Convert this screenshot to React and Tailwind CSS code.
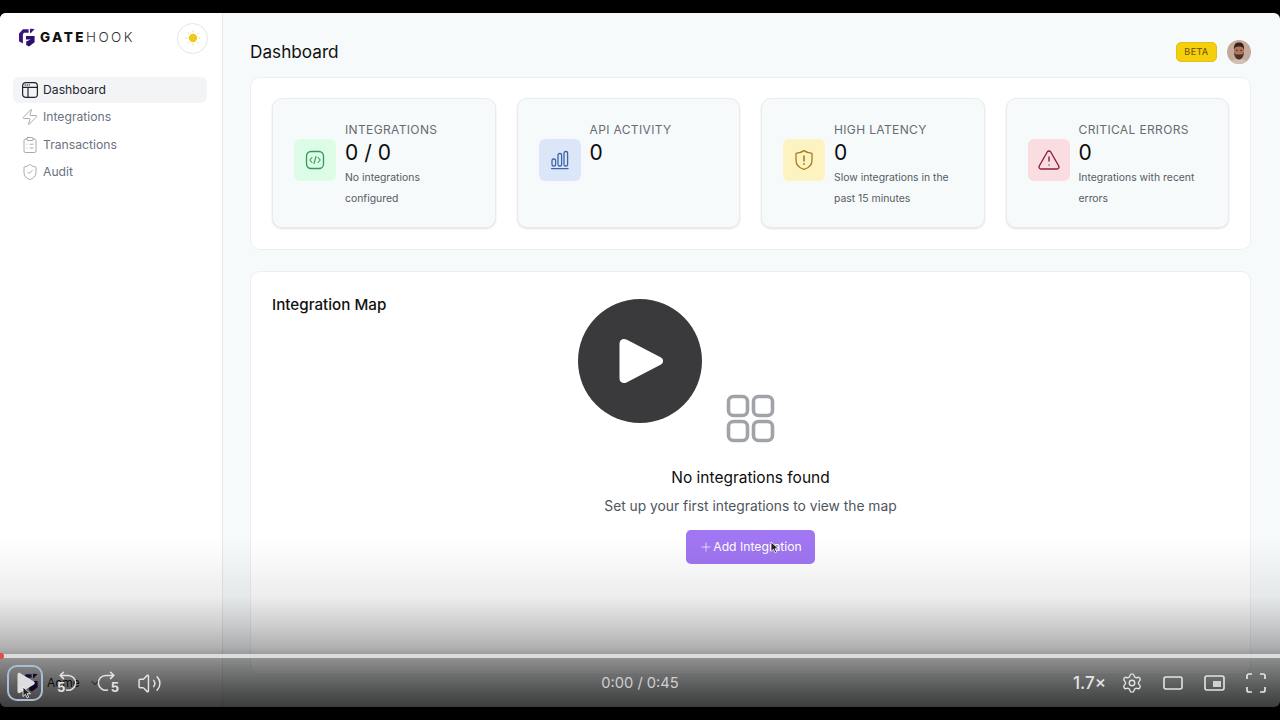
import React from "react";
import { Zap, ClipboardList, ShieldCheck, TriangleAlert, ChevronDown, Settings, Volume2, Plus } from "lucide-react";

const DashIcon = () => (
  <svg width="18" height="18" viewBox="0 0 18 18" fill="none" stroke="#1f2430" strokeWidth="1.2" className="shrink-0">
    <rect x="1.6" y="1.6" width="14.8" height="14.8" rx="3.2" />
    <path d="M1.6 6.4h14.8M7 6.4v10" />
    <path d="M4 4h.6M6 4h.6M8 4h.6" strokeWidth="1" strokeLinecap="round" />
  </svg>
);

const Logo = ({ className }) => (
  <svg width="16" height="19" viewBox="0 0 16 19" className={className}>
    <path d="M0 5.500 4 1.200h5.600v3.600H5.200L3.900 6.100V15.400L0 13.200Z" fill="#3a1480" />
    <path d="M11 .8 15.600 1 11.800 5.200 11 4.600Z" fill="#3a1480" />
    <path d="M7 8h8.600v6.200L10 18.600 7.200 17V13.600l4.600-2.200H7Z" fill="#2d0f70" />
  </svg>
);

const Sun = () => (
  <svg width="16" height="16" viewBox="0 0 16 16" fill="none">
    <circle cx="8" cy="8" r="4.200" fill="#edc91f" />
    <path d="M8 .8v1.200M8 14v1.200M.8 8H2M14 8h1.200M2.900 2.900l.8.8M12.300 12.300l.8.8M13.100 2.900l-.8.8M3.700 12.300l-.8.8" stroke="#f0dc7c" strokeWidth="1" strokeLinecap="round" />
  </svg>
);

const CodeIcon = () => (
  <svg width="20" height="20" viewBox="0 0 20 20" fill="none" stroke="#2f9a5c" strokeWidth="1.300" strokeLinecap="round" strokeLinejoin="round">
    <rect x="1.500" y="1.500" width="17" height="17" rx="4.500" />
    <path d="M7 7.500 4.800 10 7 12.500M13 7.500l2.200 2.500-2.200 2.500M11 6.500 9 13.500" strokeWidth="1.100" />
  </svg>
);

const ShieldIcon = () => (
  <svg width="20" height="22" viewBox="0 0 20 22" fill="none" stroke="#a67c1e" strokeWidth="1.300" strokeLinecap="round" strokeLinejoin="round">
    <path d="M2 4.400C5 4.200 7.800 3.200 10 1.600c2.200 1.600 5 2.600 8 2.800v7c0 4.300-3.400 7.400-8 9-4.600-1.600-8-4.700-8-9Z" />
    <path d="M10 7v5" strokeWidth="1.600" />
    <path d="M10 15h.01" strokeWidth="1.800" />
  </svg>
);

const Bars = () => (
  <svg width="20" height="20" viewBox="0 0 20 20" fill="none" stroke="#3f63a8" strokeWidth="1.300">
    <rect x="2" y="9" width="3.600" height="7" rx="1.600" />
    <rect x="8" y="3.500" width="3.600" height="12.500" rx="1.600" />
    <rect x="14" y="1.500" width="3.600" height="14.500" rx="1.600" />
    <path d="M1.500 18.600h16.600" strokeLinecap="round" />
  </svg>
);

const GridIcon = () => (
  <svg width="50" height="50" viewBox="0 0 50 50" fill="none" stroke="#a0a3a8" strokeWidth="3.600">
    <rect x="2.500" y="2.500" width="19" height="19" rx="5" />
    <rect x="27.500" y="2.500" width="19" height="19" rx="5" />
    <rect x="2.500" y="27.500" width="19" height="19" rx="5" />
    <rect x="27.500" y="27.500" width="19" height="19" rx="5" />
  </svg>
);

const Avatar = () => (
  <svg width="24" height="24" viewBox="0 0 24 24" className="shrink-0 rounded-full">
    <rect width="24" height="24" fill="#c4aa9c" />
    <path d="M3 24c1-4 5-5 9-5s8 1 9 5Z" fill="#d3c0b4" />
    <ellipse cx="12" cy="11.500" rx="5" ry="7" fill="#b07458" />
    <path d="M7 10C6.400 4 9 2.400 12 2.400S17.600 4 17 10c-.8-2.600-1.600-3.600-5-3.600S7.800 7.400 7 10Z" fill="#33211a" />
    <path d="M7 12c.3 5 2.400 7.600 5 7.600s4.700-2.600 5-7.600c-.8 1.800-1.400 2.400-2.200 2.400H9.200C8.400 14.400 7.800 13.800 7 12Z" fill="#4a3025" />
    <path d="M9 10.400h1.600M13.400 10.400H15" stroke="#2a1a14" strokeWidth="0.900" />
  </svg>
);

const Replay = ({ flip }) => (
  <div className="relative h-[24px] w-[22px]">
    <svg width="22" height="22" viewBox="0 0 22 22" fill="none" stroke="#e4e4e4" strokeWidth="1.500" strokeLinecap="round" strokeLinejoin="round" className={flip ? "-scale-x-100" : ""}>
      <path d="M6 4.400h7a7.400 7.400 0 1 1-1.500 14.600" />
      <path d="M8.500 1.200 5.200 4.400l3.300 3.200" />
    </svg>
    <span className={`absolute bottom-[1px] text-[13px] font-bold leading-none text-[#e4e4e4] ${flip ? "right-0" : "left-[2px]"}`}>5</span>
  </div>
);

const Cursor = ({ className }) => (
  <svg width="10" height="13" viewBox="0 0 10 13" className={className}>
    <path d="M1 1v9.500l2.400-2.200 1.700 3.600 1.600-.8-1.700-3.400H8.500Z" fill="#222" stroke="#fff" strokeWidth="0.800" />
  </svg>
);

const nav = [
  { label: "Integrations", Icon: Zap },
  { label: "Transactions", Icon: ClipboardList },
  { label: "Audit", Icon: ShieldCheck },
];

const stats = [
  { title: "Integrations", value: "0 / 0", desc: "No integrations configured", box: "bg-[#dcfce7]", icon: <CodeIcon /> },
  { title: "API Activity", value: "0", desc: "", box: "bg-[#dbe7f8]", icon: <Bars /> },
  { title: "High Latency", value: "0", desc: "Slow integrations in the past 15 minutes", box: "bg-[#fdf3c0]", icon: <ShieldIcon /> },
  { title: "Critical Errors", value: "0", desc: "Integrations with recent errors", box: "bg-[#f9dde0]", icon: <TriangleAlert size={24} strokeWidth={1.4} color="#8f1f3f" /> },
];

export default function App() {
  return (
    <div className="relative h-[720px] w-[1280px] overflow-hidden bg-black py-[13px] font-['Inter',sans-serif]">
      <div className="flex h-[694px] overflow-hidden rounded-[6px] bg-[#f7fafb]">
        <aside className="flex w-[223px] shrink-0 flex-col border-r border-[#e6e8eb] bg-white pl-[13px] pr-[14px]">
          <div className="flex h-[50px] items-center justify-between pl-[6px]">
            <div className="flex items-center gap-[5px] pb-[1px]">
              <Logo className="shrink-0" />
              <span className="text-[13.500px] tracking-[0.18em] text-[#111]">
                <span className="font-extrabold">GATE</span>
                <span className="font-light text-[#333]">HOOK</span>
              </span>
            </div>
            <div className="flex h-[31px] w-[31px] items-center justify-center rounded-full border border-[#e5e5df] bg-white">
              <Sun />
            </div>
          </div>
          <nav className="mr-[1px] mt-[14px] flex flex-col gap-[2px] text-[12.200px]">
            <a className="flex h-[25.500px] items-center gap-[4px] rounded-[6px] bg-[#f2f4f6] pl-[8px] text-[#1f2430]">
              <DashIcon />
              <span>Dashboard</span>
            </a>
            {nav.map(({ label, Icon }) => (
              <a key={label} className="flex h-[25.500px] items-center gap-[4px] pl-[8px] text-[#6b7280]">
                <Icon size={18} strokeWidth={1} color="#8b9098" />
                <span>{label}</span>
              </a>
            ))}
          </nav>
          <div className="mb-[15px] mt-auto flex items-center pl-[9px] text-[12px] text-[#222]">
            <Logo className="shrink-0" />
            <span className="ml-[9px]">Acme</span>
            <ChevronDown size={12} className="ml-[9px]" />
          </div>
        </aside>

        <main className="flex min-w-0 flex-1 flex-col pl-[27px] pr-[29px]">
          <header className="flex h-[64px] shrink-0 items-center justify-between pt-[14px]">
            <h1 className="text-[17.200px] font-normal text-[#111]">Dashboard</h1>
            <div className="flex items-center gap-[10px]">
              <span className="flex h-[20px] w-[41px] items-center justify-center rounded-[5px] border border-[#e3bf1c] bg-[#f5cf0c] text-[9px] font-medium tracking-[0.04em] text-[#7a5c00]">BETA</span>
              <Avatar />
            </div>
          </header>

          <section className="grid shrink-0 grid-cols-4 gap-[21px] rounded-[10px] border border-[#eceef0] bg-white px-[21px] pb-[21px] pt-[20px]">
            {stats.map((s) => (
              <div key={s.title} className="flex h-[130px] items-start gap-[9px] rounded-[10px] border border-[#e9ebee] bg-[#f7fafb] pl-[21px] pr-[12px] shadow-[0_1px_2px_rgba(0,0,0,0.12)]">
                <div className={`mt-[40px] flex h-[42px] w-[42px] shrink-0 items-center justify-center rounded-[6px] ${s.box}`}>{s.icon}</div>
                <div className="mt-[21px] flex min-w-0 flex-col">
                  <div className="text-[12px] uppercase leading-[20px] tracking-[0.03em] text-[#666b73]">{s.title}</div>
                  <div className="text-[21px] leading-[25px] text-[#0b0b0b]">{s.value}</div>
                  {s.desc && <div className="mt-[3px] max-w-[122px] text-[10.400px] leading-[20.500px] text-[#555a62]">{s.desc}</div>}
                </div>
              </div>
            ))}
          </section>

          <section className="mb-[32px] mt-[21px] flex min-h-0 flex-1 flex-col rounded-[10px] border border-[#eceef0] bg-white">
            <h2 className="pl-[21px] pt-[22px] text-[15.200px] font-medium leading-[22px] text-[#111]">Integration Map</h2>
            <div className="flex flex-col items-center pt-[78px]">
              <GridIcon />
              <div className="mt-[23px] text-[15.500px] font-normal leading-[22px] text-[#0d0d0d]">No integrations found</div>
              <div className="mt-[6px] text-[13.800px] leading-[22px] text-[#4f555d]">Set up your first integrations to view the map</div>
              <button className="relative mt-[13px] flex h-[34px] w-[129px] items-center justify-center rounded-[5px] bg-[#a076f2] text-[12.200px] text-white">
                <Plus size={14} strokeWidth={1.200} />
                <span>Add Integration</span>
                <Cursor className="absolute left-[84px] top-[11px]" />
              </button>
            </div>
          </section>
        </main>
      </div>

      <div className="absolute left-[578px] top-[299px] flex h-[124px] w-[124px] items-center justify-center rounded-full bg-[#3a393b]">
        <svg width="46" height="48" viewBox="0 0 46 48" className="ml-[2px]">
          <path d="M1.500 6.500C1.500 2.500 5.500.8 9 2.800L43 20.500c2.800 1.700 2.800 5.400 0 7.100L9 45.200C5.500 47.200 1.500 45.500 1.500 41.500Z" fill="#fff" />
        </svg>
      </div>

      <div className="absolute inset-x-0 bottom-[13px] flex h-[170px] flex-col justify-end bg-[linear-gradient(to_bottom,rgba(0,0,0,0)_0%,rgba(0,0,0,0.07)_35%,rgba(0,0,0,0.2)_53%,rgba(0,0,0,0.31)_65%,rgba(0,0,0,0.46)_73%,rgba(0,0,0,0.64)_88%,rgba(0,0,0,0.76)_100%)]">
        <div className="relative h-[4px] bg-[#dcdcdc]">
          <div className="absolute left-[-2px] top-[-1px] h-[6px] w-[6px] rounded-full bg-[#e5484d]" />
        </div>
        <div className="grid h-[49px] grid-cols-[1fr_auto_1fr] items-center px-[7px] pt-[1px]">
          <div className="flex items-center">
            <div className="relative flex h-[36px] w-[36px] items-center justify-center rounded-[10px] border-2 border-[#a9bcd8]">
              <svg width="20" height="24" viewBox="0 0 20 22" className="ml-[2px]"><path d="M1.500 2.500C1.500 1 3 .4 4.300 1.200L18 9.600c1.100.7 1.100 2.100 0 2.800L4.300 20.800c-1.300.8-2.800.2-2.800-1.300Z" fill="#dddddd" /></svg>
              <Cursor className="absolute left-[13px] top-[19px]" />
            </div>
            <div className="ml-[12px]"><Replay /></div>
            <div className="ml-[20px]"><Replay flip /></div>
            <Volume2 size={25} strokeWidth={1.400} color="#e4e4e4" className="ml-[18px]" />
          </div>
          <span className="text-[14.700px] text-[#cfcfcf]">0:00 / 0:45</span>
          <div className="mr-[7px] flex items-center justify-end text-[#e4e4e4]">
            <span className="text-[17px] font-medium leading-none">1.7×</span>
            <Settings size={22} strokeWidth={1.500} className="ml-[15px]" />
            <svg width="20" height="14" viewBox="0 0 20 14" fill="none" stroke="#e4e4e4" strokeWidth="1.600" className="ml-[20px]"><rect x="1" y="1" width="18" height="12" rx="2" /></svg>
            <svg width="21" height="16" viewBox="0 0 21 16" fill="none" className="ml-[21px]"><rect x="1" y="1" width="19" height="14" rx="2" stroke="#e4e4e4" strokeWidth="1.600" /><rect x="9" y="6" width="8" height="6" fill="#cfcfcf" /></svg>
            <svg width="20" height="20" viewBox="0 0 20 20" fill="none" stroke="#e4e4e4" strokeWidth="1.700" className="ml-[21px]"><path d="M1 6V3a2 2 0 0 1 2-2h3M14 1h3a2 2 0 0 1 2 2v3M19 14v3a2 2 0 0 1-2 2h-3M6 19H3a2 2 0 0 1-2-2v-3" /></svg>
          </div>
        </div>
      </div>
    </div>
  );
}
